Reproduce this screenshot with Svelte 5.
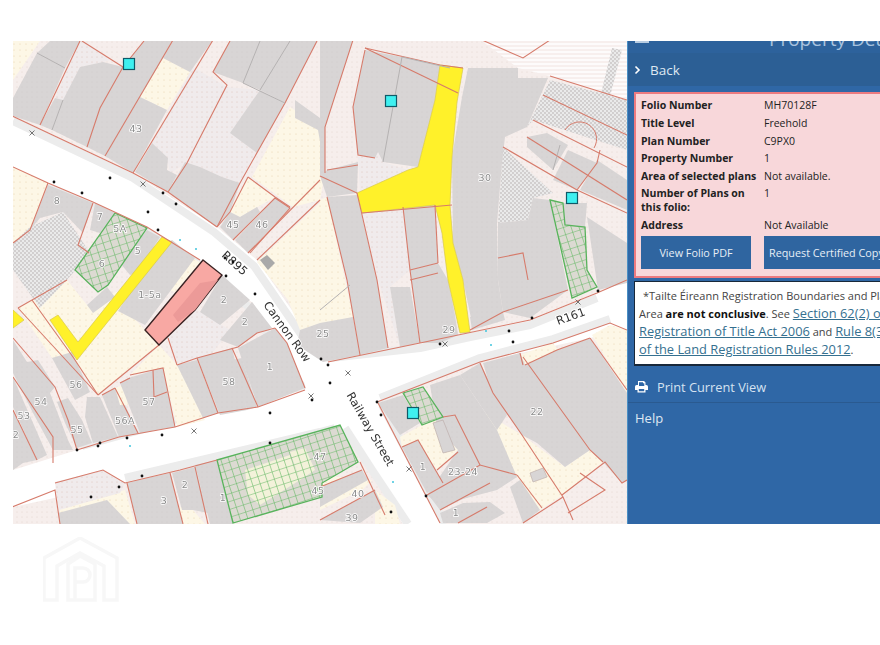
<script>
  const pale = [
    '13,41 40,41 13,80','13,167 48,183 30,230 13,243','163,58 190,72 167,110 140,97','290,107 320,127 325,173 320,200 293,207 252,177',
    '257,262 325,198 345,280 353,317 300,330 288,300','230,212 248,177 275,197 240,217','18,308 32,300 73,357 98,395 75,352 52,358',
    '32,300 67,280 87,305 115,297 145,330 159,345 98,395 73,357','130,375 159,345 177,365 205,420 177,427 163,368','115,388 123,385 128,405 120,405',
    '520,355 553,343 558,350 523,365','592,335 610,325 627,330 627,393','480,410 522,435 565,467 590,450 603,462 563,495 540,510 517,477',
    '437,427 458,450 437,470 417,440','400,437 422,425 443,417 455,450 430,465 418,440 402,447','320,200 327,197 345,280 320,280','60,510 125,490 135,524 60,524',
    '172,505 193,510 205,524 178,524','320,510 362,490 372,480 320,475','375,490 395,505 400,524 375,524','100,300 140,280 78,342 70,335','165,245 200,262 175,292 140,280'
  ];
  const dotted = [
    '193,67 227,87 187,163 170,173 167,158 152,143','227,87 260,90 233,130 257,153 240,183 222,177 200,167 183,162',
    '80,41 55,98 63,102 80,67 103,62 110,60 82,41','358,157 378,152 383,162 408,170 360,192','168,338 197,310 230,330 207,360 177,363',
    '55,482 103,470 125,483 120,493 58,510','362,213 403,207 410,270 390,287 400,347 378,280'
  ];
  const hatch = [
    '13,243 30,227 63,212 90,253 67,280 40,308 13,270','550,80 627,100 627,150 533,120 527,127','503,147 553,193 533,198 528,220 498,223','597,110 612,48 622,50 606,112'
  ];
  const bld = [
    '13,98 37,53 65,68 40,125 13,116','50,41 80,41 65,68 37,53','40,125 55,98 63,100 52,130','52,130 63,100 80,67 103,62 123,67 100,108 87,147','144,41 173,41 140,97 105,156 87,147 100,108 123,67',
    '140,97 167,110 133,173 105,156','173,41 212,41 190,72 163,58','152,143 168,158 167,170 177,175 168,192 135,172','185,162 200,167 222,177 240,183 230,212 217,227 168,192',
    '213,72 230,41 317,41 285,103 260,90 243,83','260,90 285,103 257,153 230,133','295,100 320,118 320,125 325,170 318,130 295,118',
    '320,40 353,40 325,127 325,173 320,176','365,50 353,107 358,155 375,158 378,152 383,162 418,167 435,100 440,65 402,57',
    '320,176 327,170 358,162 357,193 327,197','468,68 518,68 518,78 548,78 527,127 505,137 502,163 497,223 498,280 503,312 472,323 463,280 453,243 452,157 462,97',
    '498,223 528,220 533,198 550,200 568,290 530,318 503,312 498,280','527,137 547,133 568,145 553,170 527,147','568,150 597,163 577,190 553,180','597,160 627,180 627,210 580,190',
    '563,203 587,203 585,227 565,225','587,217 627,243 627,283 598,290','327,197 357,195 377,280 388,348 360,355 347,280','403,207 435,205 438,263 410,270',
    '390,287 410,287 420,343 400,347','410,270 438,263 448,280 455,315 458,335 440,343 420,343','470,317 503,312 505,320 472,330','320,323 353,317 360,355 323,362 297,345 300,330',
    '220,227 230,212 240,217 257,207 260,212 233,240','235,240 275,198 290,208 248,253','30,230 48,185 93,203 83,233 63,212 40,218','95,203 115,213 100,233 90,230',
    '120,263 147,230 160,237 137,273 130,275','87,305 107,287 115,297 93,313','158,250 172,240 195,258 145,325 118,311','222,275 250,300 220,325 200,312','220,340 252,302 272,328 257,333 238,347',
    '177,365 197,360 218,413 203,418','197,358 232,348 247,410 220,415','232,360 242,358 257,407 247,410','238,348 275,328 287,343 305,388 258,407',
    '120,383 128,378 163,368 175,427 140,433','102,395 115,388 120,405 125,405 138,433 119,437','52,358 72,352 90,392 75,400','87,397 100,397 118,437 93,443 85,417',
    '57,402 68,398 82,420 92,443 77,448 65,423','13,340 27,362 38,360 55,387 50,393 68,440 73,450 53,450 33,413 13,373','13,377 47,455 37,460 13,407','13,410 37,460 23,463 13,470',
    '58,513 107,500 130,524 60,524','127,483 147,478 170,473 183,524 137,524','172,473 195,467 208,513 193,510 182,510','195,465 217,460 233,524 210,524',
    '320,487 362,470 368,480 320,507','320,520 375,490 383,507 360,523','378,403 403,395 420,423 400,435','402,447 418,440 443,483 427,493',
    '430,385 460,375 497,430 517,477 497,490 440,505 427,495 458,450 437,427','460,375 480,363 507,415 497,430','483,363 520,353 525,365 557,350 590,338 627,393 627,480 622,483 603,462 590,450 565,467 537,443 522,435 492,393',
    '510,487 520,480 540,510 523,523','430,497 480,465 490,483 467,497 440,510','440,513 463,503 490,502 505,513 487,523 443,523'
  ];
  const smallBld = ['433,423 443,420 455,450 443,453','530,473 543,468 547,477 533,482'];
  const pinkDark = '173,315 200,283 218,280 195,310 178,322';
  const green = [
    '115,213 147,228 108,285 98,292 75,270','550,200 563,203 565,225 585,227 587,270 597,287 572,298 568,280','217,460 340,425 358,462 322,483 322,497 233,523','403,393 423,387 443,417 422,425'
  ];
  const greenInner = ['217,460 340,425 358,462 322,483 322,497 233,523','115,213 147,228 108,285 98,292 75,270','403,393 423,387 443,417 422,425','550,200 563,203 565,225 585,227 587,270 597,287 572,298 568,280'];
  const greenLight = ['245,470 290,455 300,480 260,505 248,495','290,452 305,448 315,470 300,480'];
  const lines = [
    '12,116 133,173 168,192 217,227','13,167 48,183 93,202 147,227 200,260','40,125 80,41','87,147 100,108 123,67 144,41','105,156 173,40','133,173 213,40',
    '168,192 187,163 227,85 213,72 230,41','217,227 240,183 285,103 317,41','82,41 123,67','233,240 275,198 290,208 250,253','248,177 275,197 290,207','217,227 230,212 248,177',
    '257,260 320,200','248,253 320,180','48,183 30,230 13,243','93,203 78,245 89,253','18,308 98,395','32,300 73,357 98,395','13,338 55,387 68,420 77,450','13,377 53,437 53,463','18,308 32,300 67,280',
    '98,395 159,345','130,375 163,368 175,427','120,383 130,378','102,395 115,388','77,450 119,437 175,427 218,413 258,407 305,390','115,388 138,433','153,370 154,397 167,392',
    '177,365 197,358 238,347 257,333 275,328','197,358 218,413','232,348 258,407','275,328 287,343 305,388','168,338 177,365','13,410 37,460',
    '328,362 420,343 530,320 597,293 627,280','377,402 480,362 553,343 610,323 627,330','353,40 325,127 325,173','365,50 353,107 358,155 375,158','365,48 440,65 463,68','365,48 458,93',
    '327,170 358,165','320,176 357,193','357,193 377,280 388,348','327,197 347,280 360,355','362,213 452,205','403,207 410,270 420,343','435,205 438,263','410,270 438,263','410,280 438,273',
    '550,76 627,100','543,95 627,135','533,120 627,167','503,147 577,190 627,213','527,137 627,200','482,40 523,58 550,40','498,258 523,253 528,280','577,190 597,163 600,150',
    '480,363 493,393 522,435 563,497 573,520','562,495 605,462 622,483 627,480','523,357 590,450 603,462','580,473 605,490 568,513','427,495 480,465 517,475','440,510 490,483','458,523 487,507',
    '517,475 542,508','523,523 563,497','378,403 440,523','402,447 418,440 443,483','443,417 455,415 480,465','437,470 458,452','55,483 103,470 125,483 180,470 217,460','12,507 55,490 60,524',
    '127,483 137,524','170,473 183,524','195,467 208,524','320,487 362,470','320,520 375,490','360,462 385,515','520,353 523,365','590,338 557,350 525,365','627,390 590,338','470,330 503,312 568,290'
  ];
  const grayLines = ['63,100 52,130','450,68 402,57 383,162','37,53 65,68','560,145 553,170','320,310 350,285','260,41 243,83','290,41 260,90','243,83 285,103'];
  const dots = [[110,178],[54,182],[82,193],[163,193],[176,204],[148,212],[158,230],[225,258],[233,262],[255,294],[312,400],[270,413],[270,443],[162,435],[127,438],[100,443],[98,446],[77,450],[142,476],[119,487],[91,497],[321,359],[328,365],[330,383],[440,344],[509,331],[513,342],[532,318],[598,291],[377,402],[381,415],[426,496],[391,512],[226,276]];
  const xs = [[32,133],[143,184],[311,396],[194,431],[348,373],[445,344],[578,302],[409,469]];
  const cyans = [[180,240],[196,249],[130,446],[486,331],[491,345],[393,482]];
  const squares = [[129,64],[391,101],[572,198],[413,413]];
  const labels = [
    ['43',136,132],['45',233,228],['46',262,228],['8',57,204],['7',100,220],['5A',120,232],['6',102,267],['5',138,254],['1-5a',150,298],['2',224,303],['2',245,325],['1',270,370],['58',229,385],
    ['57',149,405],['56A',125,424],['56',76,388],['55',77,433],['54',41,405],['53',24,419],['2',16,438],['3',164,504],['2',185,488],['1',223,501],['47',320,460],['45',318,494],['25',323,337],
    ['29',449,333],['30',485,181],['22',537,415],['40',358,497],['39',352,521],['1',423,470],['23-24',463,475],['1',456,516]
  ];
  const roads = [['R895',232,266,42],['Cannon Row',284,334,54],['Railway Street',367,431,60],['R161',572,320,-20]];
  const details = [
    ['Folio Number','MH70128F'],['Title Level','Freehold'],['Plan Number','C9PX0'],['Property Number','1'],['Area of selected plans','Not available.'],['Number of Plans on this folio:','1'],['Address','Not Available']
  ];
</script>

<div class="page">
  <div class="main">
    <svg class="map" viewBox="13 41 614 483" width="614" height="483">
      <defs>
        <pattern id="dotY" width="6" height="6" patternUnits="userSpaceOnUse"><rect width="6" height="6" fill="#fdf7e6"/><circle cx="2" cy="2" r=".6" fill="#e8d2b0"/></pattern>
        <pattern id="dotP" width="5" height="5" patternUnits="userSpaceOnUse"><rect width="5" height="5" fill="#f0ebec"/><circle cx="2" cy="2" r=".55" fill="#dcc0b8"/></pattern>
        <pattern id="dotB" width="5" height="5" patternUnits="userSpaceOnUse"><rect width="5" height="5" fill="#f6eeec"/><circle cx="2" cy="2" r=".5" fill="#e2d0ca"/></pattern>
        <pattern id="dotG" width="5" height="5" patternUnits="userSpaceOnUse"><rect width="5" height="5" fill="#d8d5d5"/><circle cx="2" cy="2" r=".5" fill="#cfc9c9"/></pattern>
        <pattern id="hatch" width="4" height="4" patternUnits="userSpaceOnUse"><rect width="4" height="4" fill="#eaeaea"/><circle cx="1" cy="1" r=".9" fill="#c6c2c2"/><circle cx="3" cy="3" r=".9" fill="#c6c2c2"/></pattern>
        <pattern id="rule" width="6" height="4" patternUnits="userSpaceOnUse"><rect width="6" height="4" fill="#fdfbfb"/><path d="M0 2H6" stroke="#eddcd8" stroke-width=".8"/></pattern>
        <pattern id="grid" width="7.500" height="7.500" patternUnits="userSpaceOnUse" patternTransform="rotate(-18)"><path d="M0 0H7.500M0 0V7.500" stroke="#62b862" stroke-width="1.100" fill="none"/></pattern>
      </defs>
      <rect x="13" y="41" width="614" height="483" fill="url(#dotB)"/>
      <polygon points="482,41 627,41 627,100 550,76 518,68" fill="url(#rule)"/>
      <polygon fill="#fff" points="13,116 133,173 217,227 257,260 328,362 420,343 530,320 627,280 627,330 480,362 377,402 442,524 403,524 340,425 123,483 13,507 13,470 77,450 305,390 253,303 147,227 48,183 13,167"/>
      <g fill="none" stroke="#ececec" stroke-width="8" stroke-linejoin="round">
        <polyline points="13,121 133,178 214,232 254,266 305,340 328,357"/>
        <polyline points="13,172 48,188 93,207 147,232 200,265 250,308 285,360 300,385"/>
        <polyline points="82,446 305,385"/>
        <polyline points="125,478 320,432 335,428"/>
        <polyline points="380,398 480,358 553,339 610,319"/>
        <polyline points="330,358 420,348 470,337 530,325 597,298"/>
        <polyline points="345,428 372,470 408,524"/>
        <polyline points="382,405 427,490 445,524"/>
      </g>
      <g fill="url(#dotY)">{#each pale as p}<polygon points={p}/>{/each}</g>
      <g fill="url(#dotP)">{#each dotted as p}<polygon points={p}/>{/each}</g>
      <g fill="url(#hatch)">{#each hatch as p}<polygon points={p}/>{/each}</g>
      <g fill="url(#dotG)">{#each bld as p}<polygon points={p}/>{/each}</g>
      <g fill="#d8d5d5" stroke="#b9a7a4" stroke-width=".6">{#each smallBld as p}<polygon points={p}/>{/each}</g>
      <polygon points="260,260 267,255 275,263 268,270" fill="#a9a9a9"/>
      <g fill="#dcdad2">{#each greenInner as p}<polygon points={p}/>{/each}</g>
      <g fill="#f3f2da">{#each greenLight as p}<polygon points={p}/>{/each}</g>
      <g fill="url(#grid)" stroke="#58b35c" stroke-width="1.300">{#each green as p}<polygon points={p}/>{/each}</g>
      <g fill="#fff12a" stroke="#d8c84a" stroke-width=".7">
        <polygon points="440,65 463,68 457,102 452,157 450,205 453,243 463,280 470,332 460,333 448,280 442,233 435,205 362,213 357,193 408,170 418,167 435,100"/>
        <polygon points="162,237 172,242 77,360 50,320 58,315 78,342"/>
        <polygon points="13,310 24,320 13,328"/>
      </g>
      <g fill="none" stroke="#d67b6b" stroke-width="1.100">{#each lines as p}<polyline points={p}/>{/each}</g>
      <g fill="none" stroke="#b5b2b2" stroke-width="1">{#each grayLines as p}<polyline points={p}/>{/each}</g>
      <path d="M565,130 A15,15 0 0 1 594,148" fill="none" stroke="#d67b6b"/>
      <polygon points="203,260 222,275 195,310 159,345 145,330" fill="#f8a8a3" stroke="#3a2323" stroke-width="1.400"/>
      <polygon points={pinkDark} fill="#ec9a98"/>
      <g class="labels">{#each labels as l}<text x={l[1]} y={l[2]}>{l[0]}</text>{/each}</g>
      <g class="roads">{#each roads as r}<text transform="translate({r[1]} {r[2]}) rotate({r[3]})">{r[0]}</text>{/each}</g>
      <g fill="#111">{#each dots as d}<circle cx={d[0]} cy={d[1]} r="1.400"/>{/each}</g>
      <g stroke="#555" stroke-width=".8">{#each xs as d}<path d="M{d[0]-2.500} {d[1]-2.500}l5 5m0-5l-5 5"/>{/each}</g>
      <g fill="#41c4dc">{#each cyans as d}<circle cx={d[0]} cy={d[1]} r="1"/>{/each}</g>
      <g fill="#3ff0f0" stroke="#0f5a68" stroke-width="1.200">{#each squares as d}<rect x={d[0]-5.500} y={d[1]-5.500} width="11" height="11"/>{/each}</g>
    </svg>

    <aside class="side">
      <header class="top">
        <span class="burger"></span>
        <span class="title">Property Details</span>
      </header>
      <div class="back"><svg width="8" height="10" viewBox="0 0 8 10"><path d="M1.500 1.500L5 5L1.500 8.500" fill="none" stroke="#fff" stroke-width="1.600"/></svg><span>Back</span></div>

      <section class="folio">
        <dl>
          {#each details as d}
            <div class="row"><dt>{d[0]}</dt><dd>{d[1]}</dd></div>
          {/each}
        </dl>
        <div class="btns">
          <button class="b1">View Folio PDF</button>
          <button class="b2">Request Certified Copy</button>
        </div>
      </section>

      <section class="note">
        <p class="first">*Tailte Éireann Registration Boundaries and Plan</p>
        <p>Area <b>are not conclusive</b>. See <a href="#s">Section 62(2) of the</a></p>
        <p><a href="#r">Registration of Title Act 2006</a> and <a href="#l">Rule 8(3)(c)</a></p>
        <p><a href="#m">of the Land Registration Rules 2012</a>.</p>
      </section>

      <div class="print">
        <svg width="13" height="13" viewBox="0 0 13 13"><path fill="#fff" d="M3 1h6l1.500 1.500V5h.5A1.800 1.800 0 0 1 13 6.800V10h-2.500v2.500h-8V10H0V6.800A1.800 1.800 0 0 1 2 5h1zM4 2.200V6h5.300V3.200H8V2.200zM3.800 9v2.300h5.400V9z"/></svg>
        <span>Print Current View</span>
      </div>
      <div class="help">Help</div>
    </aside>
  </div>

  <div class="foot">
    <svg width="76" height="66" viewBox="0 0 76 66" fill="none" stroke="#f7f7f7" stroke-width="3.500">
      <path d="M1 63V21L37 1L74 21V63H61V29L37 16L14 29V63Z"/>
      <path d="M25 63V27L37 19L52 27V63Z"/>
      <path d="M32 63V31H40a7 7 0 0 1 0 14H32"/>
    </svg>
  </div>
</div>

<style>
  :global(body) { margin: 0; background: #fff; overflow: hidden; }
  .page { width: 880px; height: 645px; overflow: hidden; padding-top: 41px; box-sizing: border-box; font-family: "Open Sans", "Liberation Sans", sans-serif; }
  .main { display: flex; padding-left: 13px; height: 483px; }
  .map { display: block; flex: none; filter: blur(.4px); }
  .labels text { font: 9.500px "DejaVu Sans", sans-serif; fill: #8b8b8b; text-anchor: middle; paint-order: stroke; stroke: #fff; stroke-width: 1.500px; letter-spacing: .5px; }
  .roads text { font: 11.500px "DejaVu Sans", sans-serif; fill: #333; text-anchor: middle; paint-order: stroke; stroke: #fff; stroke-width: 2px; }

  .side { flex: none; width: 253px; background: #2f67a6; overflow: hidden; border-left: 1px solid #4a8fc4; box-sizing: border-box; }
  .top { height: 12px; background: #2d629c; overflow: hidden; display: flex; }
  .burger { flex: none; width: 14px; height: 2px; margin: 0 0 0 7px; background: #b9cde2; }
  .title { margin: -15px 0 0 120px; font-size: 19px; line-height: 26px; color: #a9c3df; white-space: nowrap; }
  .back { height: 33px; background: #2c5f95; display: flex; align-items: center; gap: 8px; padding-left: 6px; color: #dfe8f2; font-size: 13.500px; }

  .folio { margin: 6px 0 0 6px; width: 290px; box-sizing: border-box; background: #f8d7da; border: 2px solid #ec7a80; padding: 2.700px 0 0 5px; height: 186px; color: #222; font-size: 10.500px; }
  dl { margin: 0; }
  .row { display: flex; line-height: 14px; padding: 1.800px 0; }
  dt { width: 123px; font-weight: 700; flex: none; }
  dd { margin: 0; }
  .btns { display: flex; gap: 13px; margin-top: 2px; }
  button { height: 33px; border: 0; background: #2f65a0; color: #e6eef6; font: 10.800px "Open Sans", sans-serif; padding: 0; flex: none; white-space: nowrap; }
  .b1 { width: 110px; }
  .b2 { width: 130px; text-align: left; padding-left: 5px; }

  .note { margin: 3px 0 0 6px; width: 290px; height: 85px; box-sizing: border-box; background: #fff; border: 1px solid #18283a; border-width: 1px 0 2px 1px; padding: 5px 0 0 4px; color: #444; font-size: 11px; }
  .note p { margin: 0; height: 18px; line-height: 18px; white-space: nowrap; }
  .note .first { padding-left: 4px; height: 17px; }
  .note b { color: #111; }
  a { color: #35708f; font-size: 12.850px; }

  .print { margin-top: 5px; height: 31px; display: flex; align-items: center; gap: 9px; padding-left: 7px; color: #d5e2f1; font-size: 12.800px; border-bottom: 1px solid #2a5a90; }
  .help { padding: 6px 0 0 7px; color: #dfe8f2; font-size: 13px; }
  .foot { padding: 13px 0 0 43px; }
  .foot svg { display: block; }
</style>
